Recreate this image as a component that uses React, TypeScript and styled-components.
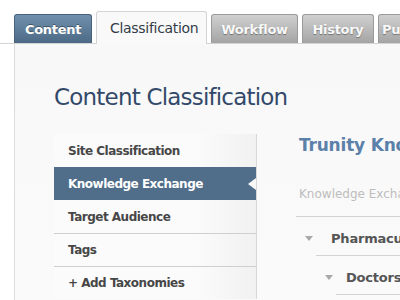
import React from "react";
import styled, { createGlobalStyle, css } from "styled-components";

const GlobalStyle = createGlobalStyle`
  html, body {
    margin: 0;
    padding: 0;
    background: #ffffff;
    font-family: "DejaVu Sans", "Liberation Sans", sans-serif;
    overflow: hidden;
  }
`;

const Page = styled.div({
  width: 400,
  height: 300,
  overflow: "hidden",
  display: "flex",
  flexDirection: "column",
});

const TabBar = styled.div({
  display: "flex",
  alignItems: "flex-end",
  gap: 4,
  paddingLeft: 14,
  paddingTop: 11,
  height: 32,
  borderBottom: "1px solid #d4d4d4",
  whiteSpace: "nowrap",
});

type TabKind = "blue" | "active" | "gray";

const Tab = styled.div<{ $kind: TabKind; $w: number }>`
  box-sizing: border-box;
  flex: none;
  width: ${(p) => p.$w}px;
  height: 29px;
  border-radius: 3px 3px 0 0;
  display: flex;
  align-items: center;
  justify-content: center;
  font-size: 13px;
  font-weight: bold;
  letter-spacing: -0.3px;
  ${(p) =>
    p.$kind === "blue" &&
    css`
      color: #ffffff;
      background: linear-gradient(#7090ad, #4c6a86);
      border: 1px solid #48627b;
      border-bottom: none;
      text-shadow: 0 -1px 0 rgba(0, 0, 0, 0.35);
    `}
  ${(p) =>
    p.$kind === "gray" &&
    css`
      color: #f8f8f8;
      background: linear-gradient(#d0d0d0, #a4a4a4);
      border: 1px solid #9a9a9a;
      border-bottom: none;
      text-shadow: 0 1px 1px rgba(0, 0, 0, 0.35);
    `}
  ${(p) =>
    p.$kind === "active" &&
    css`
      height: 33px;
      margin-bottom: -1px;
      color: #333c48;
      font-weight: normal;
      font-size: 14px;
      background: #f9f9f9;
      border: 1px solid #d4d4d4;
      border-bottom: none;
      justify-content: flex-start;
      padding-left: 13px;
    `}
`;

const Panel = styled.div({
  flex: 1,
  marginLeft: 14,
  borderLeft: "1px solid #dcdcdc",
  background: "linear-gradient(#f8f8f8, #fafafa)",
  paddingLeft: 39,
});

const Title = styled.h1({
  margin: 0,
  paddingTop: 40,
  height: 50,
  fontSize: 23,
  fontWeight: "normal",
  color: "#33496a",
  letterSpacing: -0.8,
  whiteSpace: "nowrap",
});

const Body = styled.div({
  display: "grid",
  gridTemplateColumns: "202px 1fr",
});

const Nav = styled.div({
  display: "flex",
  flexDirection: "column",
  background: "linear-gradient(90deg, #fbfbfb 70%, #f1f1f1)",
});

const NavItem = styled.div<{ $active?: boolean; $sep?: boolean }>`
  position: relative;
  height: 32px;
  display: flex;
  align-items: center;
  padding-left: 14px;
  font-size: 12px;
  font-weight: bold;
  white-space: nowrap;
  letter-spacing: -0.5px;
  color: ${(p) => (p.$active ? "#ffffff" : "#474747")};
  background: ${(p) => (p.$active ? "#506d89" : "transparent")};
  border-top: 1px solid ${(p) => (p.$sep ? "#cfcfcf" : "transparent")};
  ${(p) =>
    p.$active &&
    css`
      &::after {
        content: "";
        position: absolute;
        right: 0;
        top: 10px;
        border-style: solid;
        border-width: 6px 8px 6px 0;
        border-color: transparent #f8f8f8 transparent transparent;
      }
    `}
`;

const Detail = styled.div({
  borderLeft: "1px solid #d8d8d8",
  paddingLeft: 42,
  whiteSpace: "nowrap",
  overflow: "hidden",
});

const DetailTitle = styled.div({
  fontSize: 17,
  fontWeight: "bold",
  color: "#5b80a9",
  height: 36,
  paddingTop: 1,
  letterSpacing: -0.2,
});

const Crumb = styled.div({
  fontSize: 12,
  color: "#bdbdbd",
  height: 45,
  display: "flex",
  alignItems: "center",
  borderBottom: "1px solid #d2d2d2",
  marginLeft: -3,
  paddingLeft: 3,
});

const TreeRow = styled.div<{ $level: number }>`
  position: relative;
  display: flex;
  align-items: center;
  height: 39px;
  box-sizing: border-box;
  padding-top: 3px;
  margin-left: ${(p) => -3 + p.$level * 20}px;
  padding-left: 9px;
  font-size: 13px;
  font-weight: bold;
  letter-spacing: -0.2px;
  color: #555555;
  &::after {
    content: "";
    position: absolute;
    left: 20px;
    right: 0;
    bottom: 0;
    height: 1px;
    background: #d2d2d2;
  }
`;

const Caret = styled.span<{ $gap: number }>`
  flex: none;
  width: 0;
  height: 0;
  border-left: 4px solid transparent;
  border-right: 4px solid transparent;
  border-top: 5px solid #a9a9a9;
  margin-right: ${(p) => p.$gap}px;
`;

export default function App() {
  return (
    <Page>
      <GlobalStyle />
      <TabBar>
        <Tab $kind="blue" $w={78}>Content</Tab>
        <Tab $kind="active" $w={111}>Classification</Tab>
        <Tab $kind="gray" $w={87}>Workflow</Tab>
        <Tab $kind="gray" $w={72}>History</Tab>
        <Tab $kind="gray" $w={60}>Publish</Tab>
      </TabBar>
      <Panel>
        <Title>Content Classification</Title>
        <Body>
          <Nav>
            <NavItem>Site Classification</NavItem>
            <NavItem $active>Knowledge Exchange</NavItem>
            <NavItem>Target Audience</NavItem>
            <NavItem $sep>Tags</NavItem>
            <NavItem $sep>+ Add Taxonomies</NavItem>
          </Nav>
          <Detail>
            <DetailTitle>Trunity Knowledge Exchange</DetailTitle>
            <Crumb>Knowledge Exchange</Crumb>
            <TreeRow $level={0}>
              <Caret $gap={18} />
              Pharmacuetical
            </TreeRow>
            <TreeRow $level={1}>
              <Caret $gap={13} />
              Doctors
            </TreeRow>
          </Detail>
        </Body>
      </Panel>
    </Page>
  );
}
